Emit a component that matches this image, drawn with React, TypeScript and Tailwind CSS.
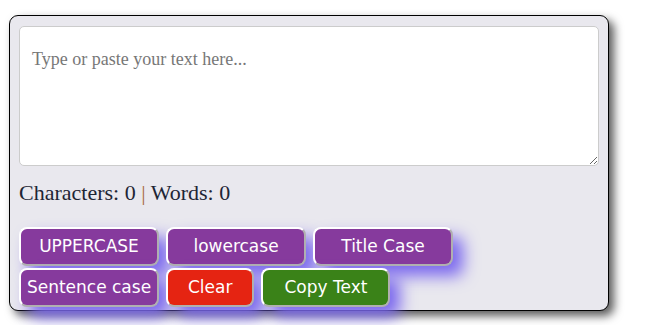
import React, { useState } from 'react';

const caseBtn =
  'w-[140px] h-[39px] rounded-lg border-2 border-t-white border-l-white border-r-[#b0b0b0] border-b-[#b0b0b0] bg-[#863a9d] pt-px text-white text-[17px] shadow-[10px_10px_16px_#7b68ee]';

const App: React.FC = () => {
  const [text, setText] = useState('');

  const chars = text.length;
  const words = text.trim() ? text.trim().split(/\s+/).length : 0;

  const toTitle = (s: string) => s.toLowerCase().replace(/\b\w/g, (c) => c.toUpperCase());
  const toSentence = (s: string) =>
    s.toLowerCase().replace(/(^\s*\w|[.!?]\s+\w)/g, (c) => c.toUpperCase());

  return (
    <div className="min-h-[325px] bg-white pt-[15px] pl-[9px]" style={{ fontFamily: '"DejaVu Sans", sans-serif' }}>
      <div className="w-[600px] rounded-[9px] border border-black bg-[#e9e8ee] px-[9px] pt-[10px] pb-[3px] shadow-[5px_5px_10px_#5a5a5a]">
        <textarea
          value={text}
          onChange={(e) => setText(e.target.value)}
          placeholder="Type or paste your text here..."
          className="block h-[140px] w-full resize-y rounded-[5px] border border-[#cccccc] bg-white pt-[19px] pl-3 pr-3 text-[18px] text-black outline-none placeholder:text-[#777]"
          style={{ fontFamily: '"Liberation Serif", serif' }}
        />
        <p
          className="mt-[14px] text-[22px] leading-[25px] text-[#1e2535]"
          style={{ fontFamily: '"Liberation Serif", serif' }}
        >
          Characters: {chars} <span className="text-[#a86d3c]">|</span> Words: {words}
        </p>
        <div className="mt-[22px] flex flex-wrap gap-x-[7px] gap-y-[2px]">
          <button className={caseBtn} onClick={() => setText(text.toUpperCase())}>
            UPPERCASE
          </button>
          <button className={caseBtn} onClick={() => setText(text.toLowerCase())}>
            lowercase
          </button>
          <button className={caseBtn} onClick={() => setText(toTitle(text))}>
            Title Case
          </button>
          <button className={caseBtn} onClick={() => setText(toSentence(text))}>
            Sentence case
          </button>
          <button
            className="h-[39px] rounded-lg border-2 border-t-white border-l-white border-r-[#b0b0b0] border-b-[#b0b0b0] bg-[#e52412] px-[20px] pt-px text-[17px] text-white shadow-[10px_10px_16px_#7b68ee]"
            onClick={() => setText('')}
          >
            Clear
          </button>
          <button
            className="h-[39px] rounded-lg border-2 border-t-white border-l-white border-r-[#b0b0b0] border-b-[#b0b0b0] bg-[#3a8218] px-[21px] pt-px text-[17px] text-white shadow-[10px_10px_16px_#7b68ee]"
            onClick={() => navigator.clipboard?.writeText(text)}
          >
            Copy Text
          </button>
        </div>
      </div>
    </div>
  );
};

export default App;
